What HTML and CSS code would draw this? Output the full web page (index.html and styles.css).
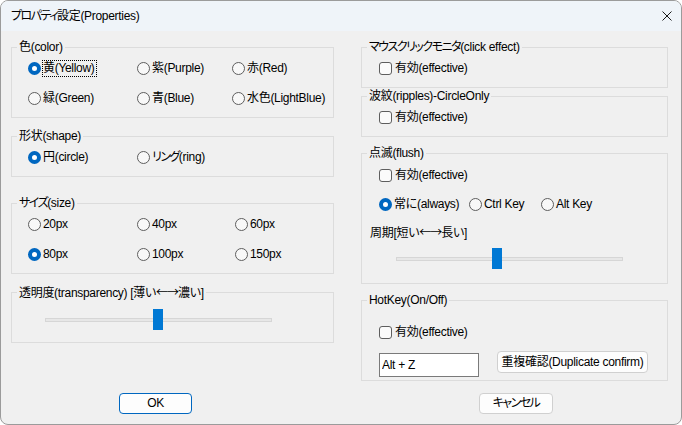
FILE: index.html
```html
<!DOCTYPE html>
<html lang="ja">
<head>
    <meta charset="UTF-8">
    <title>プロパティ設定(Properties)</title>
    <link rel="stylesheet" href="styles.css">
</head>
<body>
    <div class="window">
        <div class="titlebar">
            <span class="title"><span class="kana">プロパティ</span>設定(Properties)</span>
            <svg class="close" width="10" height="10" viewBox="0 0 10 10">
                <path d="M0.5 0.5 L9.5 9.5 M9.5 0.5 L0.5 9.5" stroke="#1a1a1a" stroke-width="1" fill="none"/>
            </svg>
        </div>

        <div class="content">
            <!-- 左側 -->
            <div class="col col-left">
                <fieldset class="group">
                    <legend>色(color)</legend>
                    <div class="opts color">
                        <div class="opt"><span class="radio on"></span><span class="focus">黄(Yellow)</span></div>
                        <div class="opt"><span class="radio"></span><span>紫(Purple)</span></div>
                        <div class="opt"><span class="radio"></span><span>赤(Red)</span></div>
                        <div class="opt"><span class="radio"></span><span>緑(Green)</span></div>
                        <div class="opt"><span class="radio"></span><span>青(Blue)</span></div>
                        <div class="opt"><span class="radio"></span><span>水色(LightBlue)</span></div>
                    </div>
                </fieldset>

                <fieldset class="group shape">
                    <legend>形状(shape)</legend>
                    <div class="opts">
                        <div class="opt"><span class="radio on"></span><span>円(circle)</span></div>
                        <div class="opt"><span class="radio"></span><span><span class="kana">リング</span>(ring)</span></div>
                    </div>
                </fieldset>

                <fieldset class="group size">
                    <legend><span class="kana">サイズ</span>(size)</legend>
                    <div class="opts sizes">
                        <div class="opt"><span class="radio"></span><span>20px</span></div>
                        <div class="opt"><span class="radio"></span><span>40px</span></div>
                        <div class="opt"><span class="radio"></span><span>60px</span></div>
                        <div class="opt"><span class="radio on"></span><span>80px</span></div>
                        <div class="opt"><span class="radio"></span><span>100px</span></div>
                        <div class="opt"><span class="radio"></span><span>150px</span></div>
                    </div>
                </fieldset>

                <fieldset class="group alpha">
                    <legend>透明度(transparency) [薄い<span class="arrow">←→</span>濃い]</legend>
                    <div class="alpha-body">
                        <div class="slider">
                            <div class="track"></div>
                            <div class="thumb" style="left: 108px"></div>
                        </div>
                    </div>
                </fieldset>
            </div>

            <!-- 右側 -->
            <div class="col col-right">
                <fieldset class="group mouse">
                    <legend><span class="kana">マウスクリックモニタ</span>(click effect)</legend>
                    <div class="simple-body">
                        <div class="check"><span class="box"></span><span>有効(effective)</span></div>
                    </div>
                </fieldset>

                <fieldset class="group ripple">
                    <legend>波紋(ripples)-CircleOnly</legend>
                    <div class="simple-body">
                        <div class="check"><span class="box"></span><span>有効(effective)</span></div>
                    </div>
                </fieldset>

                <fieldset class="group flush">
                    <legend>点滅(flush)</legend>
                    <div class="flush-body">
                        <div class="check"><span class="box"></span><span>有効(effective)</span></div>
                        <div class="opts keys">
                            <div class="opt"><span class="radio on"></span><span>常に(always)</span></div>
                            <div class="opt"><span class="radio"></span><span>Ctrl Key</span></div>
                            <div class="opt"><span class="radio"></span><span>Alt Key</span></div>
                        </div>
                        <div class="period">周期[短い<span class="arrow">←→</span>長い]</div>
                        <div class="slider right">
                            <div class="track"></div>
                            <div class="thumb" style="left: 96px"></div>
                        </div>
                    </div>
                </fieldset>

                <fieldset class="group hotkey">
                    <legend>HotKey(On/Off)</legend>
                    <div class="hotkey-body">
                        <div class="check"><span class="box"></span><span>有効(effective)</span></div>
                        <div class="hotkey-row">
                            <input class="keybox" type="text" value="Alt + Z">
                            <button class="btn dup">重複確認(Duplicate confirm)</button>
                        </div>
                    </div>
                </fieldset>
            </div>
        </div>

        <div class="footer">
            <div class="foot-left"><button class="btn ok">OK</button></div>
            <div class="foot-right"><button class="btn cancel"><span class="kana">キャンセル</span></button></div>
        </div>
    </div>
</body>
</html>
```

FILE: styles.css
```css
body {
    margin: 0;
    background: #ffffff;
    font-family: "Liberation Sans", "Noto Sans CJK JP", sans-serif;
    font-size: 12px;
    letter-spacing: -0.3px;
    color: #000;
    font-feature-settings: "palt";
}

/* カタカナは詰め気味に */
.kana {
    letter-spacing: -1.5px;
}

.arrow {
    font-family: "Noto Sans CJK JP", sans-serif;
    letter-spacing: -1px;
}

.window {
    width: 682px;
    height: 425px;
    box-sizing: border-box;
    border: 1px solid #9b9b9b;
    border-radius: 8px;
    background: #f0f0f0;
    display: flex;
    flex-direction: column;
    overflow: hidden;
}

.titlebar {
    height: 30px;
    flex: none;
    background: #eff4f9;
    display: flex;
    align-items: center;
    justify-content: space-between;
    padding: 0 9px 0 10px;
    line-height: 14px;
}

.content {
    flex: 1;
    display: flex;
    gap: 27px;
    padding: 9px 13px 0 10px;
}

.col-left {
    width: 323px;
}

.col-right {
    width: 307px;
}

.group {
    margin: 0;
    padding: 0;
    min-width: 0;
    border: 1px solid #dcdcdc;
}

.group legend {
    margin-left: 5px;
    padding: 0 2px;
    line-height: 14px;
}

.shape, .alpha {
    margin-top: 11px;
}

.size {
    margin-top: 19px;
}

.ripple {
    margin-top: 1px;
}

.flush, .hotkey {
    margin-top: 9px;
}

/* ラジオボタン */
.opts {
    display: grid;
    grid-template-columns: 109px 95px auto;
    row-gap: 10px;
    padding: 4px 0 9px 16px;
}

.opts.sizes {
    grid-template-columns: 109px 98px auto;
}

.opts.keys {
    grid-template-columns: 90px 72px auto;
    padding: 0 0 0 17px;
    margin-top: 9px;
}

.opt {
    display: flex;
    align-items: center;
    gap: 2px;
    height: 20px;
    line-height: 14px;
}

.radio {
    flex: none;
    width: 13px;
    height: 13px;
    box-sizing: border-box;
    border: 1px solid #5e5e5e;
    border-radius: 50%;
    background: #f8f8f8;
}

.radio.on {
    border: 4px solid #0067c0;
    background: #ffffff;
}

.focus {
    outline: 1px dotted #000;
    outline-offset: 0;
    padding: 0 1px 1px 0;
}

/* チェックボックス */
.check {
    display: flex;
    align-items: center;
    gap: 3px;
    height: 20px;
    padding-left: 17px;
    line-height: 14px;
}

.box {
    flex: none;
    width: 13px;
    height: 13px;
    box-sizing: border-box;
    border: 1px solid #5e5e5e;
    border-radius: 3px;
    background: #fbfbfb;
}

.simple-body {
    padding: 4px 0 9px 0;
}

.flush-body {
    padding: 5px 0 14px 0;
}

.period {
    margin-top: 11px;
    padding-left: 8px;
    line-height: 14px;
}

.hotkey-body {
    padding: 15px 0 3px 0;
}

.hotkey-row {
    display: flex;
    align-items: flex-start;
    gap: 18px;
    margin-top: 9px;
    padding-left: 17px;
}

.keybox {
    width: 100px;
    height: 24px;
    margin: 2px 0 0 0;
    box-sizing: border-box;
    border: 1px solid #7a7a7a;
    background: #fff;
    padding: 0 2px;
    font: inherit;
    letter-spacing: inherit;
    font-feature-settings: "palt";
    color: #000;
    outline: none;
}

/* スライダー */
.alpha-body {
    padding: 9px 0 12px 0;
}

.slider {
    position: relative;
    width: 227px;
    height: 21px;
    margin-left: 33px;
}

.slider.right {
    margin-left: 34px;
    margin-top: 8px;
}

.track {
    position: absolute;
    left: 0;
    right: 0;
    top: 9px;
    height: 4px;
    box-sizing: border-box;
    border: 1px solid #d6d6d6;
    background: #e7e7e7;
}

.thumb {
    position: absolute;
    top: 0;
    width: 10px;
    height: 21px;
    background: #0078d4;
}

/* ボタン */
.btn {
    height: 21px;
    box-sizing: border-box;
    border: 1px solid #d0d0d0;
    border-radius: 4px;
    background: #fdfdfd;
    padding: 0;
    font: inherit;
    letter-spacing: inherit;
    font-feature-settings: "palt";
    color: #000;
    line-height: 19px;
    white-space: nowrap;
}

.btn.dup {
    width: 151px;
    height: 22px;
}

.footer {
    flex: none;
    display: flex;
    gap: 27px;
    padding: 0 13px 10px 10px;
}

.foot-left {
    width: 323px;
}

.foot-right {
    width: 307px;
}

.btn.ok {
    width: 73px;
    margin-left: 108px;
    border-color: #0067c0;
}

.btn.cancel {
    width: 74px;
    margin-left: 118px;
}
```
